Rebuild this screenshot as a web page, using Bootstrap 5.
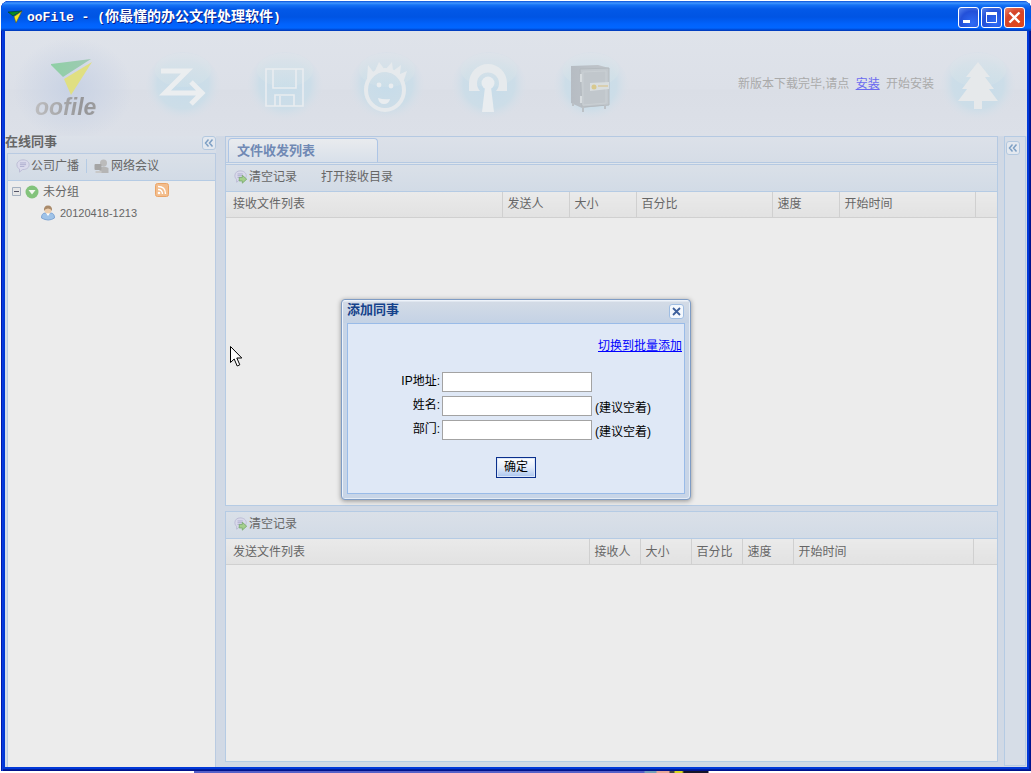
<!DOCTYPE html>
<html lang="zh-CN">
<head>
<meta charset="utf-8">
<meta name="viewport" content="width=device-width, initial-scale=1">
<title>ooFile</title>
<link href="https://cdn.jsdelivr.net/npm/bootstrap@5.3.0/dist/css/bootstrap.min.css" rel="stylesheet">
<style>
body{font:12px/16px "Liberation Sans","Noto Sans CJK SC",sans-serif;color:#666;background:#fff;padding:1px 0 0 1px}
.desktop{min-height:calc(100vh - 1px)}
.app-window{background:#0138d8;border-radius:8px 8px 0 0;padding:0 4px 4px;box-shadow:inset 1px 0 #0019a8,inset 2px 0 #0a3be0,inset -1px -1px #00138c,inset -2px -2px #001ea0}
.titlebar{height:30px;margin:0 -4px;padding:2px 6px 0 7px;border-radius:8px 8px 0 0;background:linear-gradient(#0a50d8 0,#3f96ff 2px,#1572f5 4px,#0359e8 8px,#0054e3 16px,#0162fc 23px,#0166ff 27px,#0044cc 29px,#0038b8 30px)}
.titlebar h1{font:bold 14px/20px "Liberation Mono","Noto Sans CJK SC",monospace;color:#fff;text-shadow:1px 1px #0a1f8c;white-space:pre}
.titlebar .latin{font-size:13px}
.win-btns{gap:2px}
.win-btn{width:21px;height:21px;border:1px solid #fff;border-radius:3px;background:radial-gradient(circle at 70% 80%,#2f6cf5,#2350d8 60%,#5a86ee)}
.win-btn.win-close{background:radial-gradient(circle at 70% 80%,#e0461a,#d5452a 60%,#ee8a70)}
.client{background:#d1d9e5}
.topbar{height:105px;background:linear-gradient(#dfe3ea,#dce0e8 58px,#dadee6 59px,#dce0e8)}
.brand{width:127px;background:radial-gradient(ellipse at 68px 58px,#c8d2e4 0,#dce0e800 60px)}
.brand-mark{width:46px;height:38px;margin-left:46px;margin-top:27px}
.brand-name{font:italic bold 23px/24px "Liberation Sans",sans-serif;background:linear-gradient(90deg,#bdbdbf,#959597 50%,#b0b0b2);-webkit-background-clip:text;background-clip:text;color:transparent;margin-left:30px;margin-top:-1px}
.tool-btn{width:102px;height:105px}
.tree-btn{width:78px;height:105px;margin:0 10px 0 5px}
.notice{color:#aaa}
.notice a{color:#6a6af0;margin:0 3px}
.sidebar{flex:0 0 211px;background:linear-gradient(#dce1e9,#d3dbe6 30px)}
.pane-title{font-size:13px;line-height:12px;height:17px;font-weight:bold;color:#666}
.side-body{border:1px solid #b9cbe2;border-bottom:0;background:#ececec;margin-left:2px}
.bar{height:27px;background:linear-gradient(#dae0e8,#d2dbe6);border-bottom:1px solid #b5cbe4;padding-bottom:2px}
.flat{border:0;background:none;padding:0;color:inherit;display:flex;align-items:center;gap:1px;line-height:16px;white-space:nowrap}
.flat svg,.tree-item svg{flex-shrink:0}
.bar-sep{width:1px;height:14px;background:#b5cbe4;margin:0 7px}
.fold{width:14px;height:14px;border:1px solid #b3c8df;border-radius:3px;background:#e3e8ef;color:#7d9fc4;padding:0}
.fold svg,.dlg-close svg,.win-btn svg{display:block;margin:auto}
.center{min-width:0;padding:0 6px 5px 9px}
.tabs{height:29px;border:1px solid #b5c9e2;border-bottom:0;background:linear-gradient(#dce1e9,#d5dce6);padding:1px 2px 0}
.tab-strip{height:3px;margin:0 -2px;border:solid #b5c9e2;border-width:1px 0;background:#dfe5ec}
.tabs .nav-link{width:150px;height:24px;border:1px solid #adc5e6;border-bottom:0;border-radius:4px 4px 0 0;background:linear-gradient(#e9ebee,#d8e0ea);padding:0 0 0 8px;font-size:13px;line-height:18px;font-weight:bold;color:#7089b4;text-align:left}
.grid-pane{border:1px solid #b5cbe4;background:#ececec}
.pane-in{flex:26 1 0;border-top:0}
.pane-out{flex:19 1 0;margin-top:5px}
.files{table-layout:fixed;width:100%;border-collapse:collapse}
.files th{height:25px;padding:0 0 0 5px;font-weight:normal;line-height:16px;background:linear-gradient(#eaeaea,#e2e2e2);border-bottom:1px solid #d0d0d0;border-right:1px solid #d0d0d0;white-space:nowrap;overflow:hidden}
.files th:first-child{padding-left:7px}
.files th:last-child{border-right:0}
.w-s{width:51px}.w-m{width:67px}.w-l{width:136px}.w-xl{width:180px}.w-end{width:22px}.w-end2{width:24px}
.east{flex:0 0 22px;margin:0 1px 1px 0;border:1px solid #b5cbe4;background:#d6dde7;padding:4px 0 0 1px}
.tree-item{height:21px;white-space:nowrap}
.tree-child{padding-left:32px}
.tree-child span{font-size:11px}
.feed{margin:0 46px 4px auto}
.overlay{z-index:5;pointer-events:none}
.dlg{pointer-events:auto;width:350px;border:1px solid #7f9cc4;border-radius:4px;background:#c8d5e7;padding:0 5px 5px;box-shadow:inset 1px 1px #eef3fa,inset -1px -1px #e4ecf6,0 1px 5px #0006;color:#000}
.dlg-head{height:23px;margin:0 -4px;padding:0 5px 0 4px;background:linear-gradient(#eef3fa 1px,#d3dbe6 2px,#c4d2e5);border-radius:3px 3px 0 0}
.dlg-head h2{font:bold 13px/20px "Liberation Sans","Noto Sans CJK SC",sans-serif;color:#15428b}
.dlg-close{width:15px;height:15px;padding:0;border:1px solid #9fbde2;border-radius:3px;background:#f4f8fd;color:#3d5f9c;margin-top:4px}
.dlg-body{border:1px solid #99bbe8;background:#dfe8f6;padding:14px 2px 15px}
.dlg-body a{color:#00f}
.dlg-switch{margin-bottom:18px}
.dlg-row{height:24px}
.dlg-row label{width:90px;text-align:right;line-height:18px;margin-right:2px}
.dlg-row input{width:150px;height:20px;border:1px solid #a3a3a3;background:#fff;padding:0 3px;margin-right:3px}
.hint{line-height:18px;padding-top:3px}
.dlg-foot{padding-top:13px}
.ok-btn{width:40px;height:21px;padding:0;border:1px solid #0a2f8c;background:linear-gradient(#fff,#e3ecfa 50%,#a9c4ee);box-shadow:inset 0 0 0 1px #dce7f8;line-height:16px;color:#000}
.pointer{left:229px;top:345px;z-index:6}
.desktop-edge{height:2px;margin-left:193px;background:linear-gradient(90deg,#5560c8 450px,#74a0b8 451px 462px,#e8a898 463px 475px,#444 476px 480px,#d8d820 481px 488px,#15152a 490px 514px,#fff 515px)}
</style>
</head>
<body>
<svg width="0" height="0" class="position-absolute" aria-hidden="true">
  <defs>
    <radialGradient id="orbFill" cx=".5" cy=".45" r=".52"><stop offset="0" stop-color="#c6dcea"/><stop offset=".65" stop-color="#cbdde8" stop-opacity=".9"/><stop offset="1" stop-color="#dbe0e8" stop-opacity="0"/></radialGradient>
    <linearGradient id="shine" x2="0" y2="1"><stop offset="0" stop-color="#dee3ea" stop-opacity=".9"/><stop offset="1" stop-color="#d3e2e8" stop-opacity=".4"/></linearGradient>
    <linearGradient id="steel"><stop offset="0" stop-color="#b6bcc3"/><stop offset="1" stop-color="#c1c6cb"/></linearGradient>
  </defs>
  <symbol id="orb" viewBox="0 0 78 74"><ellipse cx="39" cy="37" rx="38" ry="36" fill="url(#orbFill)"/><ellipse cx="39" cy="19" rx="28" ry="17" fill="url(#shine)"/></symbol>
  <symbol id="clear" viewBox="0 0 16 16"><path d="M7 1C3.500 1 1 3.200 1 6.500c0 2 1 3.500 2 4.200V14l3-2.500h1c4 0 7-1.800 7-5S11 1 7 1z" fill="#d9d9ea" stroke="#b9b9d4"/><path d="M4 4.500h6M4 6.500h6M4 8.500h3" stroke="#a9a9cc"/><path d="M6 8.500h3.500V6l5 4.500-5 4.500v-2.500H6z" fill="#a5cf8c" stroke="#7aab70"/></symbol>
  <symbol id="chev" viewBox="0 0 10 8"><path d="M4.500.5 1.500 4l3 3.500M8.500.5 5.500 4l3 3.500" fill="none" stroke="currentColor" stroke-width="1.500"/></symbol>
</svg>

<div class="desktop d-flex flex-column">
<div class="app-window flex-grow-1 d-flex flex-column">
  <header class="titlebar d-flex align-items-center">
    <svg width="15" height="14" viewBox="0 0 15 14" class="me-1" aria-hidden="true"><path d="M0 2 14 1 5 6z" fill="#0a8a20" stroke="#033" stroke-width=".6"/><path d="M14 1 6 6.500 8 13z" fill="#f5e820" stroke="#553" stroke-width=".6"/></svg>
    <h1 class="m-0 flex-grow-1"><span class="latin">ooFile - (</span>你最懂的办公文件处理软件<span class="latin">)</span></h1>
    <div class="win-btns d-flex">
      <button class="win-btn p-0" aria-label="最小化"><svg width="19" height="19"><path d="M4 12h7v3H4z" fill="#fff"/></svg></button>
      <button class="win-btn p-0" aria-label="最大化"><svg width="19" height="19"><path d="M4.500 5.500h10v9h-10z" fill="none" stroke="#fff"/><path d="M4 4h11v3H4z" fill="#fff"/></svg></button>
      <button class="win-btn win-close p-0" aria-label="关闭"><svg width="19" height="19"><path d="m4.500 4.500 10 10m0-10-10 10" stroke="#fff" stroke-width="2.400"/></svg></button>
    </div>
  </header>

  <div class="client flex-grow-1 d-flex flex-column position-relative">
    <div class="topbar d-flex align-items-center">
      <div class="brand h-100">
        <svg class="brand-mark d-block" viewBox="0 0 46 38" aria-hidden="true"><defs><linearGradient id="gr"><stop offset="0" stop-color="#8fd0a5"/><stop offset="1" stop-color="#9fc9b4"/></linearGradient></defs><path d="M-1 6 40 1 12 19z" fill="url(#gr)"/><path d="M41 4 13 21 20 37z" fill="#e0df82"/></svg>
        <div class="brand-name">oofile</div>
      </div>
      <button class="flat tool-btn" aria-label="传送"><svg width="102" height="105"><use href="#orb" x="12" y="20" width="78" height="74"/><path d="M29 40h26L33 62h36M59 51l11 11-11 11" fill="none" stroke="#ebeef0" stroke-width="5"/></svg></button>
      <button class="flat tool-btn" aria-label="保存"><svg width="102" height="105"><use href="#orb" x="12" y="20" width="78" height="74"/><path d="M32 38h37v37H32zM39 38v19h23V38M41 75V64h19v11M46 65v10" fill="none" stroke="#e9edf0" stroke-width="1.600"/></svg></button>
      <button class="flat tool-btn" aria-label="同事"><svg width="102" height="105"><use href="#orb" x="12" y="20" width="78" height="74"/><ellipse cx="49" cy="59" rx="19" ry="20" fill="none" stroke="#e6eaed" stroke-width="4"/><path d="m31 48 1-14 6 8 5-11 6 8 7-8 1 9 8-6-1 9 7-3-4 12-8-9-12-3-10 4z" fill="#e6eaed"/><circle cx="43" cy="54" r="2.400" fill="#e9edf0"/><circle cx="55" cy="55" r="2.400" fill="#e9edf0"/><path d="M42 67q6 2 12 1-1 5-6 5t-6-6z" fill="#e9edf0"/></svg></button>
      <button class="flat tool-btn" aria-label="广播"><svg width="102" height="105"><use href="#orb" x="12" y="20" width="78" height="74"/><path d="M31 60v-8a19 19 0 0 1 38 0v8H58a11 11 0 1 0-16 0z" fill="#e6eaed"/><circle cx="50" cy="52" r="6.500" fill="#e9edf0"/><path d="M47 56h6l3 25H44z" fill="#e9edf0"/></svg></button>
      <button class="flat tool-btn" aria-label="保险箱"><svg width="102" height="105"><use href="#orb" x="12" y="20" width="78" height="74"/><path d="m31 35 27-1 11 3v37l-27 3-11-5z" fill="url(#steel)"/><path d="m40 38 29-1v37l-27 2z" fill="#c3c9ce" stroke="#b4babf"/><path d="m43 41 23-1v32l-23 2z" fill="#c1c7cc" stroke="#cad0d4"/><path d="M33 72v3M43 76v5M65 74v4" stroke="#bcc1c6" stroke-width="2"/><path d="m50 52 19-1v7l-19 2z" fill="#d9dedf"/><path d="M41 43v8m0 14v7" stroke="#d8dde0" stroke-width="2"/><circle cx="54" cy="56" r="2.500" fill="#d8c98e"/><path d="M58 55h10" stroke="#d9cfb0" stroke-width="2"/></svg></button>
      <p class="notice m-0 ms-auto text-nowrap">新版本下载完毕,请点 <a href="#">安装</a> 开始安装</p>
      <button class="flat tree-btn" aria-label="圣诞树"><svg width="78" height="105"><use href="#orb" y="20" width="78" height="74"/><path d="m39 31 12 15h-5l9 12h-5l9 12H43v8h-8v-8H19l9-12h-5l9-12h-5z" fill="#e6e9eb"/></svg></button>
    </div>

    <div class="d-flex flex-grow-1">
      <aside class="sidebar d-flex flex-column">
        <div class="pane-title d-flex justify-content-between"><span>在线同事</span><button class="fold flex-shrink-0" aria-label="收起"><svg width="10" height="8"><use href="#chev"/></svg></button></div>
        <div class="side-body flex-grow-1">
          <div class="bar d-flex align-items-center ps-1">
            <button class="flat ms-1"><svg width="14" height="14" viewBox="0 0 16 16"><path d="M8 1C4 1 1 3.500 1 6.500S3 11 4 11.500V15l3.500-3H8c4 0 7-2 7-5.500S12 1 8 1z" fill="#dadaeb" stroke="#b9b9d4"/><path d="M4.500 4.500h7M4.500 6.500h7M4.500 8.500h5" stroke="#a9a9cc"/></svg>公司广播</button>
            <span class="bar-sep"></span>
            <button class="flat"><svg width="16" height="15" viewBox="0 0 15 15"><circle cx="9" cy="4" r="3.500" fill="#bbb"/><path d="M5 14V9q4-3 9 0v5z" fill="#b5b5b5"/><rect y="5" width="7" height="6" rx="1" fill="#a5a5a5"/><path d="M1 12h6v2H1z" fill="#c8c8c8"/></svg>网络会议</button>
          </div>
          <div class="tree-item d-flex align-items-center ps-1">
            <svg width="9" height="9" class="me-1"><path d="M.5.500h8v8h-8z" fill="#e6e6e6" stroke="#a4b0bf"/><path d="M2 4.500h5" stroke="#556"/></svg>
            <svg width="14" height="14" class="me-1"><circle cx="7" cy="7" r="6.500" fill="#83c37b"/><path d="M3.500 5h7L7 9.500z" fill="#f2f7f0"/></svg>
            <span>未分组</span>
            <svg width="14" height="14" class="feed"><rect x=".5" y=".5" width="13" height="13" rx="2" fill="#f3bd8c" stroke="#eaa467"/><circle cx="4" cy="10" r="1.300" fill="#fff"/><path d="M3 6.500q4.500 0 4.500 4.500M3 3.500q7.500 0 7.500 7.500" fill="none" stroke="#fff" stroke-width="1.400"/></svg>
          </div>
          <div class="tree-item tree-child d-flex align-items-center">
            <svg width="16" height="16" viewBox="0 0 16 16" class="me-1"><path d="M1.500 13q0-5 4-5h5q4 0 4 5-6 4-13 0z" fill="#9fc3e8" stroke="#7fa5d4"/><path d="m6 8 2 3 2-3z" fill="#fff"/><circle cx="8" cy="5" r="3.500" fill="#eccfb0"/><path d="M4 6q-.500-5.500 4-5.500T12 6q-1-2.500-4-2.500T4 6z" fill="#a98a6a"/></svg>
            <span>20120418-1213</span>
          </div>
        </div>
      </aside>

      <main class="center flex-grow-1 d-flex flex-column">
        <div class="tabs">
          <button class="nav-link">文件收发列表</button>
          <div class="tab-strip"></div>
        </div>
        <section class="grid-pane pane-in">
          <div class="bar d-flex align-items-center ps-2">
            <button class="flat me-4"><svg width="14" height="14"><use href="#clear"/></svg>清空记录</button>
            <button class="flat">打开接收目录</button>
          </div>
          <table class="files"><thead><tr><th>接收文件列表</th><th class="w-m">发送人</th><th class="w-m">大小</th><th class="w-l">百分比</th><th class="w-m">速度</th><th class="w-l">开始时间</th><th class="w-end"></th></tr></thead></table>
        </section>
        <section class="grid-pane pane-out">
          <div class="bar d-flex align-items-center ps-2">
            <button class="flat"><svg width="14" height="14"><use href="#clear"/></svg>清空记录</button>
          </div>
          <table class="files"><thead><tr><th>发送文件列表</th><th class="w-s">接收人</th><th class="w-s">大小</th><th class="w-s">百分比</th><th class="w-s">速度</th><th class="w-xl">开始时间</th><th class="w-end2"></th></tr></thead></table>
        </section>
      </main>

      <aside class="east"><button class="fold d-block" aria-label="展开"><svg width="10" height="8"><use href="#chev"/></svg></button></aside>
    </div>

    <div class="overlay position-absolute top-0 start-0 w-100 h-100 d-flex align-items-center justify-content-center">
      <form class="dlg" role="dialog" aria-labelledby="dlgTitle">
        <div class="dlg-head d-flex justify-content-between align-items-start">
          <h2 id="dlgTitle" class="m-0">添加同事</h2>
          <button type="button" class="dlg-close" aria-label="关闭"><svg width="9" height="9"><path d="m1 1 7 7m0-7-7 7" stroke="currentColor" stroke-width="1.800"/></svg></button>
        </div>
        <div class="dlg-body">
          <div class="dlg-switch text-end"><a href="#">切换到批量添加</a></div>
          <div class="dlg-row d-flex"><label for="ip">IP地址:</label><input id="ip" type="text"></div>
          <div class="dlg-row d-flex"><label for="uname">姓名:</label><input id="uname" type="text"><span class="hint">(建议空着)</span></div>
          <div class="dlg-row d-flex"><label for="dept">部门:</label><input id="dept" type="text"><span class="hint">(建议空着)</span></div>
          <div class="dlg-foot text-center"><button type="button" class="ok-btn">确定</button></div>
        </div>
      </form>
    </div>
  </div>
</div>
<div class="desktop-edge"></div>
</div>
<svg class="pointer position-absolute" width="14" height="23" viewBox="0 0 14 23" aria-hidden="true"><path d="M1.500 1.500v16l3.700-3.500 3 7 2.600-1.200-3-6.800h5z" fill="#fff" stroke="#000"/></svg>
<script src="https://cdn.jsdelivr.net/npm/bootstrap@5.3.0/dist/js/bootstrap.bundle.min.js"></script>
</body>
</html>
